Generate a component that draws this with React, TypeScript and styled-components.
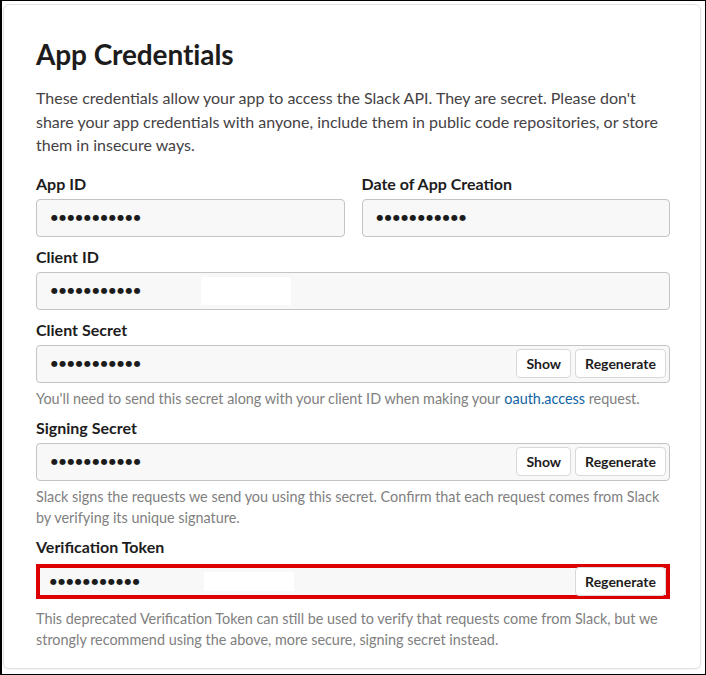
import styled, { createGlobalStyle, css } from 'styled-components'

const GlobalStyle = createGlobalStyle`
    html, body {
        margin: 0;
        padding: 0;
        background: #fff;
    }
    body {
        font-family: Lato, 'Liberation Sans', sans-serif;
        -webkit-font-smoothing: antialiased;
    }
`

type Action = 'show' | 'regenerate'

interface Field {
    label: string
    actions?: Action[]
    redacted?: boolean
    highlighted?: boolean
    help?: React.ReactNode
}

const DOTS = '●●●●●●●●●●●'

const Frame = styled.div`
    width: 706px;
    height: 675px;
    box-sizing: border-box;
    border: 1px solid #000;
    border-left-width: 2px;
    padding: 3px 4px 5px 1px;
    background: #fff;
`

const Card = styled.section`
    height: 100%;
    box-sizing: border-box;
    border: 1px solid #e2e2e2;
    border-radius: 6px;
    box-shadow: 0 1px 2px rgba(0, 0, 0, 0.06);
    padding: 29px 30px 0 32px;
    color: #1d1c1d;
`

const Title = styled.h1`
    margin: 0 0 12px;
    font-size: 28px;
    line-height: 40px;
    font-weight: 700;
    color: #1d1c1d;
    letter-spacing: -0.1px;
`

const Intro = styled.p`
    margin: 0 0 15px;
    font-size: 16px;
    line-height: 23.5px;
    color: #454245;
`

const Row = styled.div`
    display: grid;
    grid-template-columns: 1fr 1fr;
    gap: 17px;
`

const FieldBlock = styled.div`
    margin-bottom: 8px;
`

const Label = styled.label`
    display: block;
    font-size: 16px;
    line-height: 24px;
    font-weight: 700;
    color: #1d1c1d;
    margin-bottom: 3px;
`

const InputBox = styled.div<{ $highlighted?: boolean }>(
    ({ $highlighted }) => css`
        position: relative;
        display: flex;
        align-items: center;
        height: 38px;
        box-sizing: border-box;
        border: 1px solid #c4c4c4;
        border-radius: 4px;
        background: #f8f8f8;
        padding: 0 3px 0 14px;

        ${$highlighted &&
        css`
            height: 35px;
            margin-top: 5px;
            border: 4px solid #dd0000;
            border-radius: 0;
            padding: 0 0 0 10px;

            & + p {
                margin-top: 9px;
            }
        `}
    `
)

const Dots = styled.span`
    font-family: 'DejaVu Sans', sans-serif;
    font-size: 8px;
    letter-spacing: 1.3px;
    color: #1d1c1d;
    flex: 1;
`

const Redaction = styled.span`
    position: absolute;
    left: 164px;
    top: 4px;
    bottom: 4px;
    width: 90px;
    background: #fff;
`

const Buttons = styled.div`
    display: flex;
    gap: 4px;
`

const Button = styled.button`
    height: 29px;
    box-sizing: border-box;
    padding: 0 9px;
    border: 1px solid #d8d8d8;
    border-radius: 4px;
    background: #fff;
    font-family: Lato, 'Liberation Sans', sans-serif;
    font-size: 14px;
    font-weight: 700;
    color: #1d1c1d;
    cursor: pointer;
`

const Help = styled.p`
    margin: 5px 0 -1px;
    font-size: 14.4px;
    line-height: 21px;
    color: #808080;
`

const Link = styled.a`
    color: #1264a3;
    text-decoration: none;
    margin-left: 4px;
`

const FieldView = ({ label, actions = [], redacted, highlighted, help }: Field) => (
    <FieldBlock>
        <Label>{label}</Label>
        <InputBox $highlighted={highlighted}>
            <Dots>{DOTS}</Dots>
            {redacted && <Redaction />}
            {actions.length > 0 && (
                <Buttons>
                    {actions.map((a) => (
                        <Button key={a}>{a === 'show' ? 'Show' : 'Regenerate'}</Button>
                    ))}
                </Buttons>
            )}
        </InputBox>
        {help && <Help>{help}</Help>}
    </FieldBlock>
)

const FIELDS: Field[] = [
    { label: 'Client ID', redacted: true },
    {
        label: 'Client Secret',
        actions: ['show', 'regenerate'],
        help: (
            <>
                You'll need to send this secret along with your client ID when making your
                <Link href='#'>oauth.access</Link> request.
            </>
        ),
    },
    {
        label: 'Signing Secret',
        actions: ['show', 'regenerate'],
        help: 'Slack signs the requests we send you using this secret. Confirm that each request comes from Slack by verifying its unique signature.',
    },
    {
        label: 'Verification Token',
        actions: ['regenerate'],
        redacted: true,
        highlighted: true,
        help: 'This deprecated Verification Token can still be used to verify that requests come from Slack, but we strongly recommend using the above, more secure, signing secret instead.',
    },
]

const App = () => (
    <Frame>
        <GlobalStyle />
        <Card>
            <Title>App Credentials</Title>
            <Intro>
                These credentials allow your app to access the Slack API. They are secret. Please don't share your app
                credentials with anyone, include them in public code repositories, or store them in insecure ways.
            </Intro>
            <Row>
                <FieldView label='App ID' />
                <FieldView label='Date of App Creation' />
            </Row>
            {FIELDS.map((f) => (
                <FieldView key={f.label} {...f} />
            ))}
        </Card>
    </Frame>
)

export default App
